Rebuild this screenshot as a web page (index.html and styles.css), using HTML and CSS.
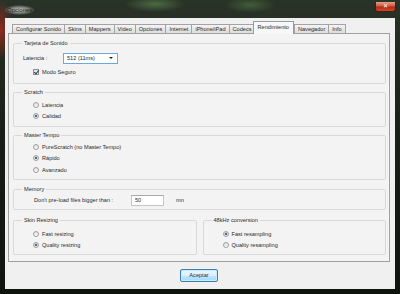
FILE: index.html
```html
<!DOCTYPE html>
<html>
<head>
<meta charset="utf-8">
<link rel="stylesheet" href="styles.css">
</head>
<body>
<div class="window">
  <div class="titlebar">
    <span class="title">Opciones</span>
    <span class="close">✕</span>
  </div>
  <div class="client">
    <div class="tabs">
      <span class="tab">Configurar Sonido</span>
      <span class="tab">Skins</span>
      <span class="tab">Mappers</span>
      <span class="tab">Video</span>
      <span class="tab">Opciones</span>
      <span class="tab">Internet</span>
      <span class="tab">iPhone/iPad</span>
      <span class="tab">Codecs</span>
      <span class="tab active">Rendimiento</span>
      <span class="tab">Navegador</span>
      <span class="tab">Info</span>
    </div>
    <div class="panel">
      <fieldset class="group g1">
        <legend>Tarjeta de Sonido</legend>
        <div class="field">
          <span class="lbl">Latencia :</span>
          <div class="combo"><span>512 (11ms)</span><span class="arrow"></span></div>
        </div>
        <div class="opt check-row"><span class="check"></span>Modo Seguro</div>
      </fieldset>
      <fieldset class="group g2">
        <legend>Scratch</legend>
        <div class="opt"><span class="radio"></span>Latencia</div>
        <div class="opt"><span class="radio on"></span>Calidad</div>
      </fieldset>
      <fieldset class="group g3">
        <legend>Master Tempo</legend>
        <div class="opt"><span class="radio"></span>PureScratch (no Master Tempo)</div>
        <div class="opt"><span class="radio on"></span>Rápido</div>
        <div class="opt"><span class="radio"></span>Avanzado</div>
      </fieldset>
      <fieldset class="group g4">
        <legend>Memory</legend>
        <div class="mem">
          <span class="memlbl">Don't pre-load files bigger than :</span>
          <span class="input">50</span>
          <span class="unit">mn</span>
        </div>
      </fieldset>
      <div class="split">
        <fieldset class="group g5">
          <legend>Skin Resizing</legend>
          <div class="opt"><span class="radio"></span>Fast resizing</div>
          <div class="opt"><span class="radio on"></span>Quality resizing</div>
        </fieldset>
        <fieldset class="group g5">
          <legend>48kHz conversion</legend>
          <div class="opt"><span class="radio on"></span>Fast resampling</div>
          <div class="opt"><span class="radio"></span>Quality resampling</div>
        </fieldset>
      </div>
    </div>
    <div class="buttons"><span class="btn">Aceptar</span></div>
  </div>
</div>
</body>
</html>
```

FILE: styles.css
```css
html, body {
  margin: 0;
  padding: 0;
}
body {
  width: 400px;
  height: 294px;
  overflow: hidden;
  background: #121712;
  font-family: "Liberation Sans", Arial, sans-serif;
  font-size: 5.6px;
  color: #2a2a2a;
}
.window {
  width: 400px;
  height: 294px;
  display: flex;
  flex-direction: column;
  background:
    radial-gradient(ellipse 30px 8px at 155px 4px, rgba(90,130,80,0.7), transparent),
    radial-gradient(ellipse 25px 8px at 250px 5px, rgba(80,120,70,0.6), transparent),
    radial-gradient(ellipse 12px 30px at 1px 30px, rgba(170,40,30,0.8), transparent),
    linear-gradient(#2a3327, #1a2118 40%, #0f140f);
}
.titlebar {
  position: relative;
  height: 18px;
  flex: 0 0 18px;
  display: flex;
  align-items: center;
  padding-left: 4px;
}
.title {
  font-size: 6px;
  color: #1e1e1e;
  padding: 2px 3px;
  margin-top: 2px;
  border-radius: 4px;
  background: radial-gradient(ellipse closest-side, rgba(235,235,235,0.8), rgba(190,190,190,0.55) 60%, rgba(120,120,120,0));
}
.close {
  position: absolute;
  right: 4px;
  top: 2px;
  width: 21px;
  height: 10px;
  box-sizing: border-box;
  border: 1px solid #4a1a12;
  border-top: none;
  border-radius: 0 0 3px 3px;
  background: linear-gradient(#e2a08e, #cf5a3f 45%, #b52a14 55%, #c94a30);
  color: #fff;
  font-size: 6px;
  line-height: 9px;
  text-align: center;
}
.client {
  flex: 0 0 271px;
  margin: 0 5px;
  background: #f0f0f0;
  box-sizing: border-box;
  padding: 3px 5px 0 3px;
  display: flex;
  flex-direction: column;
}
.tabs {
  display: flex;
  align-items: flex-end;
  height: 13px;
  padding-left: 4px;
}
.tab {
  height: 10px;
  box-sizing: border-box;
  padding: 0 3px;
  line-height: 9px;
  border: 1px solid #a3a3a3;
  border-bottom: none;
  margin-right: -1px;
  background: linear-gradient(#f4f4f4, #e6e6e6 50%, #dadada);
  white-space: nowrap;
}
.tab.active {
  height: 13px;
  line-height: 11px;
  background: #f7f7f7;
  padding: 0 4px;
  position: relative;
  z-index: 1;
  margin: 0 -1px 0 -2px;
  border-color: #9a9a9a;
}
.tab.active + .tab {
  margin-left: 1px;
}
.panel {
  height: 229px;
  box-sizing: border-box;
  border: 1px solid #a0a0a0;
  margin-top: -1px;
  background: #f3f3f3;
  padding: 6px 3px 0 4px;
  display: flex;
  flex-direction: column;
}
.group {
  margin: 0;
  padding: 0;
  border: 1px solid #d8d8d8;
  border-radius: 2px;
  box-sizing: border-box;
  min-width: 0;
}
legend {
  margin-left: 8px;
  padding: 0 2px;
  line-height: 7px;
}
.g1 { height: 44px; padding-top: 2px; }
.g2 { height: 38px; margin-top: 5px; padding-top: 3px; }
.g3 { height: 48px; margin-top: 5px; padding-top: 2px; }
.g4 { height: 24px; margin-top: 6px; padding-top: 1px; }
.split {
  display: flex;
  gap: 6px;
  margin-top: 7px;
}
.split .group { flex: 1; }
.g5 { height: 38px; padding-top: 4px; }

.field {
  display: flex;
  align-items: center;
  height: 12px;
  padding-left: 9px;
  margin-top: 3px;
}
.lbl { width: 40px; }
.combo {
  width: 55px;
  height: 11px;
  box-sizing: border-box;
  border: 1px solid #6fa8dc;
  background: #fff;
  display: flex;
  align-items: center;
  padding-left: 3px;
  position: relative;
}
.combo span:first-child { flex: 1; }
.arrow {
  width: 0;
  height: 0;
  border-left: 2px solid transparent;
  border-right: 2px solid transparent;
  border-top: 2px solid #222;
  margin-right: 4px;
}
.opt {
  display: flex;
  align-items: center;
  height: 11.5px;
  padding-left: 19px;
}
.check-row { margin-top: 2px; }
.check, .radio {
  width: 6px;
  height: 6px;
  box-sizing: border-box;
  border: 1px solid #8f8f8f;
  background: linear-gradient(#e0e0e0, #fafafa);
  margin-right: 3px;
  flex: 0 0 auto;
  position: relative;
}
.check::after {
  content: "";
  position: absolute;
  left: 1px;
  top: -1px;
  width: 2px;
  height: 4px;
  border: solid #2a3a5a;
  border-width: 0 1px 1px 0;
  transform: rotate(40deg);
}
.radio { border-radius: 50%; border-color: #a0a0a0; }
.radio.on::after {
  content: "";
  position: absolute;
  left: 1px;
  top: 1px;
  width: 2px;
  height: 2px;
  border-radius: 50%;
  background: #3d5f8a;
  box-shadow: 0 0 1px #2a4a7a;
}
.mem {
  display: flex;
  align-items: center;
  height: 12px;
  padding-left: 20px;
}
.memlbl { width: 97px; }
.input {
  width: 33px;
  height: 11px;
  box-sizing: border-box;
  border: 1px solid #c4c4c4;
  border-top-color: #a8a8a8;
  background: #fff;
  padding-left: 3px;
  line-height: 9px;
}
.unit { margin-left: 12px; }
.buttons {
  flex: 1;
  display: flex;
  align-items: center;
  justify-content: center;
}
.btn {
  width: 38px;
  height: 13px;
  box-sizing: border-box;
  border: 1px solid #3c7fb1;
  border-radius: 2px;
  background: linear-gradient(#eaf6fd, #d9f0fc 50%, #bee6fd 50%, #a7d9f5);
  box-shadow: inset 0 0 0 1px #c9eafb;
  text-align: center;
  line-height: 11px;
}
```
